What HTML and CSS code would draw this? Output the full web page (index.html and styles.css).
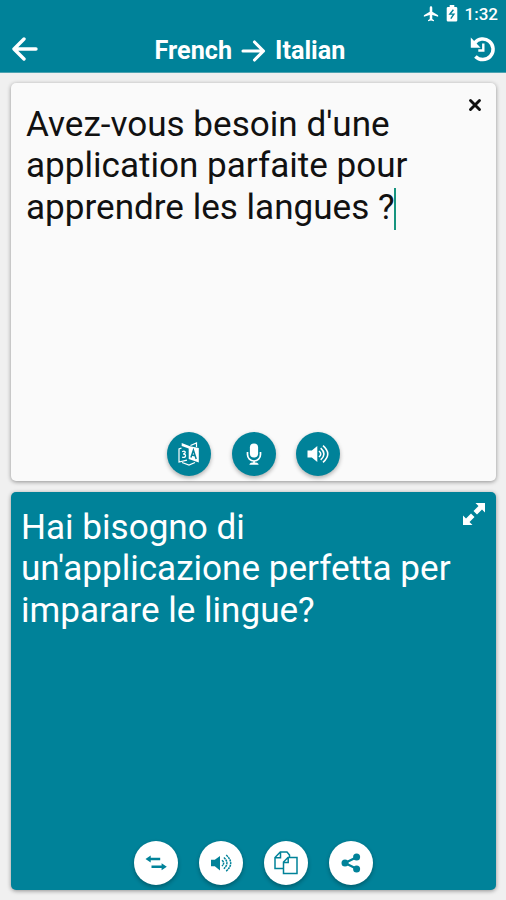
FILE: index.html
```html
<!DOCTYPE html>
<html lang="en">
<head>
    <meta charset="UTF-8">
    <meta name="viewport" content="width=device-width, initial-scale=1.0">
    <title>Translator</title>
    <link rel="stylesheet" href="styles.css">
</head>
<body>
    <header>
        <div class="status-bar">
            <svg width="18" height="18" viewBox="0 0 24 24" fill="currentColor"><path d="M21.5 15.5v-2L13.7 9V3.500a1.700 1.700 0 0 0-3.400 0V9l-7.800 4.500v2l7.800-2.300v5.300L8 20.200v1.600l4-1.100 4 1.100v-1.600l-2.300-1.700v-5.300z"/></svg>
            <svg class="battery" width="12" height="17" viewBox="0 0 12 17"><path fill="currentColor" d="M3.700 0h4.600v2H10a1.300 1.300 0 0 1 1.300 1.300v12A1.300 1.300 0 0 1 10 16.600H2a1.300 1.300 0 0 1-1.300-1.300v-12A1.300 1.300 0 0 1 2 2h1.700z"/><path d="M7.400 4.800L3.900 9.100h4L4.800 13.700" fill="none" stroke="#008299" stroke-width="1.400"/></svg>
            <span class="clock">1:32</span>
        </div>
        <div class="toolbar">
            <button class="bar-button" aria-label="Back">
                <svg width="26" height="24" viewBox="0 0 26 24" fill="none" stroke="currentColor" stroke-width="3.400" stroke-linecap="round" stroke-linejoin="round"><path d="M12 2L2 12l10 10M3 12h21"/></svg>
            </button>
            <h1>
                <span>French</span>
                <svg width="25" height="22" viewBox="0 0 25 22" fill="none" stroke="currentColor" stroke-width="3.100" stroke-linecap="round" stroke-linejoin="round"><path d="M2 11h20.500M13.500 2l9 9-9 9"/></svg>
                <span>Italian</span>
            </h1>
            <button class="bar-button" aria-label="History">
                <svg width="26" height="26" viewBox="0 0 26 26" fill="none" stroke="currentColor"><path d="M4.500 7.200A10.300 10.300 0 1 1 5.400 20.500" stroke-width="3.500"/><path d="M.8 1.500v10.200h9.800z" fill="currentColor" stroke="none"/><path d="M13.300 7.500v7H8.300" stroke-width="2.400"/></svg>
            </button>
        </div>
    </header>

    <main>
        <section class="card source">
            <p>Avez-vous besoin d'une<br>application parfaite pour<br>apprendre les langues ?<span class="cursor"></span></p>
            <button class="corner" aria-label="Clear">
                <svg width="14" height="14" viewBox="0 0 14 14" fill="none" stroke="currentColor" stroke-width="2.900" stroke-linecap="round"><path d="M2.500 2.500l9 9M11.500 2.500l-9 9"/></svg>
            </button>
            <div class="actions">
                <button aria-label="Detect text">
                    <svg width="22" height="24" viewBox="0 0 22 24"><g fill="none" stroke="currentColor"><path d="M3.500 6L1 7v13l8-1.800M4 20.500l7 2.500 6-2.500" stroke-width="1.200"/><path d="M12.500 3.500L18.500 1v4" stroke-width="1.200"/><path d="M4.200 9.800c2-1.200 3.300-.4 3 .9-.2 1-1.200 1.200-2 1.300 1.500 0 2.600.6 2.300 2-.3 1.500-2 1.700-3.300 1.100" stroke-width="1.300"/></g><path d="M3.700 1l8.300 3.200L20.800 6v14.600L10.700 17V6.600L3.700 4z" fill="currentColor"/><path d="M12.900 15.400l2.500-7.200 2.800 8.700M13.700 13l3.700.8" fill="none" stroke="#008299" stroke-width="1.500"/></svg>
                </button>
                <button aria-label="Speak">
                    <svg width="16" height="22" viewBox="0 0 16 22"><rect x="3.900" y=".4" width="8.200" height="14.200" rx="4.100" fill="currentColor"/><path d="M1.500 9v2.500a6.500 6.500 0 0 0 13 0V9M8 17.500V20" fill="none" stroke="currentColor" stroke-width="1.700"/><path d="M3.300 21.700c.5-2 2.500-2.200 4.700-2.200s4.200.2 4.700 2.200z" fill="currentColor"/></svg>
                </button>
                <button aria-label="Listen">
                    <svg width="22" height="20" viewBox="0 0 22 20"><path d="M.5 6.500h4.300L10.300 2v16l-5.500-4.500H.5z" fill="currentColor"/><path d="M12 7q3.500 3 0 6M13.700 4.200q6.500 5.800 0 11.600M16 1.700q9.500 8.300 0 16.600" fill="none" stroke="currentColor" stroke-width="1.600"/></svg>
                </button>
            </div>
        </section>

        <section class="card result">
            <p>Hai bisogno di<br>un'applicazione perfetta per<br>imparare le lingue?</p>
            <button class="corner" aria-label="Full screen">
                <svg width="24" height="24" viewBox="0 0 24 24"><path d="M13.500 1H23v9.500l-3-3-5 5L11.500 9l5-5zM10.500 23H1v-9.500l3 3 5-5 3.500 3.500-5 5z" fill="currentColor"/></svg>
            </button>
            <div class="actions">
                <button aria-label="Swap languages">
                    <svg width="22" height="16" viewBox="0 0 22 16"><path d="M5 4h10.200M6.500 11.700h11" fill="none" stroke="currentColor" stroke-width="2.500"/><path d="M.5 4L5.700.5v7zM21.800 11.700l-5.200-3.500v7z" fill="currentColor"/></svg>
                </button>
                <button aria-label="Listen">
                    <svg width="22" height="20" viewBox="0 0 22 20"><path d="M1 6.800h3.800L10 3v14.500l-5.200-4.300H1z" fill="currentColor"/><path d="M12 7.200q3.300 2.900 0 5.800M13.900 4.500q6 5.600 0 11.200M16.200 2q9 8.100 0 16.200" fill="none" stroke="currentColor" stroke-width="1.500" stroke-dasharray="2.200 .6"/></svg>
                </button>
                <button aria-label="Copy">
                    <svg width="24" height="24" viewBox="0 0 24 24" fill="none" stroke="currentColor" stroke-width="1.500"><path d="M9 17.500H1V6.500L6.300 1H13l2.500 3v2M6.500 1.300v5.500H1.200"/><path d="M9.500 22.500V11L14 6.500h9v16zM14.200 6.800v4.700H9.700"/></svg>
                </button>
                <button aria-label="Share">
                    <svg width="20" height="20" viewBox="0 0 20 20"><path d="M16 4L4 10l12 6" fill="none" stroke="currentColor" stroke-width="2.300"/><g fill="currentColor"><circle cx="15.600" cy="4" r="3.500"/><circle cx="4" cy="10" r="3.500"/><circle cx="15.600" cy="16" r="3.500"/></g></svg>
                </button>
            </div>
        </section>
    </main>
</body>
</html>
```
FILE: styles.css
```css
* {
    box-sizing: border-box;
}

body {
    margin: 0;
    height: 100vh;
    display: flex;
    flex-direction: column;
    overflow: hidden;
    font-family: Roboto, sans-serif;
    background-color: #f0f0f0;
}

svg {
    display: block;
}

button {
    padding: 0;
    border: 0;
    background: none;
    color: inherit;
}

header {
    height: 73px;
    background-color: #008299; /* teal */
    border-bottom: 1px solid #4da3b1;
    color: #fff;
}

.status-bar {
    height: 27px;
    padding-right: 8px;
    display: flex;
    justify-content: flex-end;
    align-items: center;
}

.battery {
    margin: 0 7px 0 6px;
}

.clock {
    font-size: 17px;
    font-weight: 500;
}

.toolbar {
    height: 45px;
    padding: 0 10px 0 12px;
    display: flex;
    justify-content: space-between;
    align-items: center;
}

.bar-button {
    margin-top: -1px;
}

h1 {
    margin: 2px 8px 0 0;
    display: flex;
    align-items: center;
    gap: 9px;
    font-size: 25.2px;
    font-weight: 700;
}

main {
    flex: 1;
    display: flex;
    flex-direction: column;
    gap: 11px;
    padding: 10px 10px 10px 11px;
}

.card {
    position: relative;
    display: flex;
    flex-direction: column;
    justify-content: space-between;
    border-radius: 5px;
    box-shadow: 0 1px 4px rgba(0, 0, 0, 0.4);
}

.card p {
    margin: 0;
    font-size: 35.1px;
    line-height: 41.3px;
    white-space: nowrap;
}

.source {
    height: 398px;
    padding: 21px 15px 5px;
    background-color: #fafafa;
    color: #111;
}

.result {
    flex: 1;
    padding: 15px 10px 5px;
    background-color: #008299;
    color: #fff;
}

.cursor {
    display: inline-block;
    width: 2px;
    height: 42px;
    margin: -4px 0 -4px -1px;
    vertical-align: middle;
    background-color: #16947f;
}

.corner {
    position: absolute;
    top: 15px;
    right: 14px;
}

.result .corner {
    top: 10px;
    right: 10px;
}

.actions {
    display: flex;
    justify-content: center;
    gap: 20.7px;
}

.actions button {
    width: 44px;
    height: 44px;
    display: flex;
    justify-content: center;
    align-items: center;
    border-radius: 50%;
    background-color: #008299;
    color: #fff;
    box-shadow: 0 2px 4px rgba(0, 0, 0, 0.3);
}

.result .actions button {
    background-color: #fff;
    color: #008299;
}
```
